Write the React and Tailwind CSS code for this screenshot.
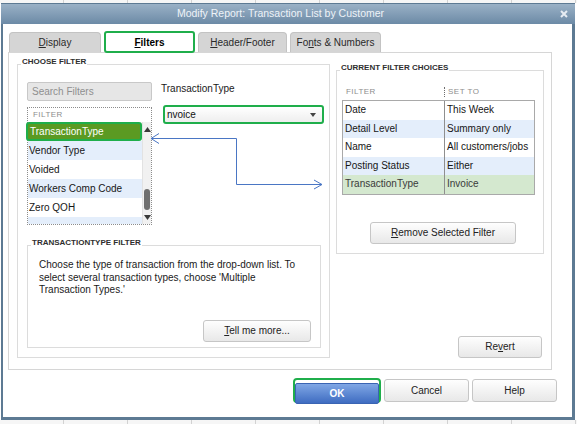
import React from "react";

const filterRows = ["Vendor Type", "Voided", "Workers Comp Code", "Zero QOH"];

const choices = [
  ["Date", "This Week"],
  ["Detail Level", "Summary only"],
  ["Name", "All customers/jobs"],
  ["Posting Status", "Either"],
  ["TransactionType", "Invoice"],
];

const stripe = (on) => (on ? "bg-[#e4eefb]" : "bg-white");

function GroupBox({ title, className, children }) {
  return (
    <div className={`relative border border-[#dcdcdc] ${className}`}>
      <span className="absolute -top-[7px] left-[3px] bg-white px-[1px] text-[8px] font-bold leading-none text-[#2e2e2e]">
        {title}
      </span>
      {children}
    </div>
  );
}

function Btn({ className, children }) {
  return (
    <button
      className={`flex items-center justify-center rounded-[3px] border border-[#c6c6c6] bg-linear-to-b from-[#fefefe] to-[#e8e8e8] text-[10px] leading-none text-[#222] ${className}`}
    >
      {children}
    </button>
  );
}

function Tri({ down }) {
  return (
    <svg width="7" height="5" viewBox="0 0 7 5">
      <path d={down ? "M0 0H7L3.5 5Z" : "M3.5 0L7 5H0Z"} fill="#3a3a3a" />
    </svg>
  );
}

function GridStrip({ className }) {
  return (
    <div className={`flex overflow-hidden bg-[#f6f6f6] ${className}`}>
      {Array.from({ length: 10 }).map((_, i) => (
        <div key={i} className="w-[64px] shrink-0 border-r border-[#d2d2d2]" />
      ))}
    </div>
  );
}

function FilterList() {
  return (
    <div className="w-[125px] h-[118px] mt-[6px] border border-dotted border-[#8c8c8c] bg-white flex flex-col">
      <div className="h-[14px] pl-[5px] text-[8px] leading-[14px] tracking-[0.06em] text-[#8d8d8d]">
        FILTER
      </div>
      <div className="flex flex-1 min-h-0">
        <div className="flex-1 flex flex-col">
          <div className="relative z-10 -ml-[2px] w-[116px] h-[19px] shrink-0 rounded-[3px] border-2 border-[#1fae4b] bg-[#5b9a22] pl-[2px] text-[10px] leading-[15px] text-white">
            TransactionType
          </div>
          {filterRows.map((name, i) => (
            <div
              key={name}
              className={`h-[19px] shrink-0 pl-[1px] text-[10px] leading-[19px] text-[#161616] ${stripe(i % 2 === 0)}`}
            >
              {name}
            </div>
          ))}
          <div className="flex-1 bg-[#e4eefb]" />
        </div>
        <div className="w-[11px] flex flex-col items-center bg-[#f1f1f1] border-l border-[#e2e2e2]">
          <div className="h-[14px] flex items-center">
            <Tri />
          </div>
          <div className="flex-1 flex flex-col justify-end pb-[4px]">
            <div className="w-[6px] h-[21px] rounded-[3px] bg-[#6f6f6f]" />
          </div>
          <div className="h-[10px] flex items-start pt-[1px]">
            <Tri down />
          </div>
        </div>
      </div>
    </div>
  );
}

function ChoicesTable() {
  return (
    <div className="pl-[5px] mt-[14px]">
      <div className="flex items-center h-[14px] text-[8px] tracking-[0.06em] text-[#8d8d8d]">
        <div className="w-[102px] pl-[4px]">FILTER</div>
        <div className="h-[10px] border-l border-dotted border-[#6d6d6d]" />
        <div className="pl-[3px]">SET TO</div>
      </div>
      <div className="mt-[1px] w-[193px] border border-[#a9a9a9] bg-white">
        {choices.map(([name, value], i) => {
          const last = i === choices.length - 1;
          return (
            <div
              key={name}
              className={`flex h-[18.6px] text-[10px] leading-[18.6px] ${last ? "bg-[#d4e8cf] text-[#3a3a3a]" : `${stripe(i % 2 === 1)} text-[#161616]`}`}
            >
              <div className="w-[102px] pl-[2px] border-r border-[#8f8f8f]">{name}</div>
              <div className="pl-[2px] whitespace-nowrap">{value}</div>
            </div>
          );
        })}
      </div>
    </div>
  );
}

export default function App() {
  return (
    <div className="relative w-[577px] h-[424px] overflow-hidden bg-white font-['Liberation_Sans',Arial,sans-serif]">
      <GridStrip className="h-[3px]" />

      <div className="flex h-[417px]">
        <div className="ml-[1px] w-[574px] h-[417px] flex flex-col">
          {/* title bar */}
          <div className="h-[21px] shrink-0 flex items-center bg-linear-to-b from-[#9ab1c6] to-[#6c8aa6] border-t border-[#5d7a93]">
            <div className="flex-1 text-center text-[10.5px] text-[#eef3f8]">
              Modify Report: Transaction List by Customer
            </div>
            <svg width="8" height="8" viewBox="0 0 8 8" className="mr-[7px]">
              <path d="M1 1L7 7M7 1L1 7" stroke="#e6ecf2" strokeWidth="2" />
            </svg>
          </div>

          <div className="h-[396px] flex flex-col bg-white border-l-2 border-r-[3px] border-b-[3px] border-[#5d7a93] px-[5px] pt-[8px]">
            {/* tabs */}
            <div className="flex gap-[3px] h-[20px] shrink-0 pl-[1px] text-[10px] text-[#2a2a2a]">
              <div className="w-[92px] h-[20px] flex items-center justify-center rounded-t-[4px] border border-b-0 border-[#c3c3c3] bg-[#d5d5d5]">
                <span><u className="underline-offset-1">D</u>isplay</span>
              </div>
              <div className="relative z-10 w-[91px] h-[22px] -mt-[1px] flex items-center justify-center rounded-[3px] border-2 border-[#1fae4b] bg-white font-bold text-black">
                <span><u className="underline-offset-1">F</u>ilters</span>
              </div>
              <div className="w-[89px] h-[20px] flex items-center justify-center rounded-t-[4px] border border-b-0 border-[#c3c3c3] bg-[#d5d5d5]">
                <span><u className="underline-offset-1">H</u>eader/Footer</span>
              </div>
              <div className="w-[91px] h-[20px] flex items-center justify-center rounded-t-[4px] border border-b-0 border-[#c3c3c3] bg-[#d5d5d5]">
                <span>Fo<u className="underline-offset-1">n</u>ts &amp; Numbers</span>
              </div>
            </div>

            {/* tab page */}
            <div className="w-[544px] h-[318px] shrink-0 border border-[#d6d6d6] flex pl-[8px] pt-[11px]">
              <GroupBox title="CHOOSE FILTER" className="w-[313px] h-[294px] pl-[9px] pt-[17px] flex flex-col">
                <div className="flex items-start">
                  <div className="w-[125px] h-[19px] rounded-[2px] border border-[#c8c8c8] bg-[#e6e6e6] pl-[4px] text-[10px] leading-[17px] text-[#8f8f8f]">
                    Search Filters
                  </div>
                  <div className="ml-[9px] mt-[1px] text-[10px] leading-[12px] text-[#1a1a1a]">
                    TransactionType
                  </div>
                </div>

                <div className="flex items-start">
                  <FilterList />
                  <div className="ml-[11px] mt-[4px] w-[161px] h-[19px] flex items-center justify-between rounded-[3px] border-2 border-[#1fae4b] bg-linear-to-b from-white to-[#eeeeee] pl-[2px] pr-[6px] text-[10px] text-[#111]">
                    <span>nvoice</span>
                    <svg width="6" height="4" viewBox="0 0 6 4">
                      <path d="M0 0H6L3 4Z" fill="#444" />
                    </svg>
                  </div>
                </div>

                <GroupBox title="TRANSACTIONTYPE FILTER" className="mt-[20px] w-[294px] h-[103px] flex flex-col">
                  <p className="pl-[11px] pt-[13px] text-[10px] leading-[12.5px] text-[#1a1a1a]">
                    Choose the type of transaction from the drop-down list. To
                    <br />
                    select several transaction types, choose &apos;Multiple
                    <br />
                    Transaction Types.&apos;
                  </p>
                  <Btn className="mt-auto mb-[5px] mr-[9px] self-end w-[108px] h-[22px]">
                    <span><u className="underline-offset-1">T</u>ell me more...</span>
                  </Btn>
                </GroupBox>
              </GroupBox>

              <div className="ml-[6px] w-[208px] h-[294px] flex flex-col">
                <GroupBox title="CURRENT FILTER CHOICES" className="mt-[6px] h-[184px] flex flex-col">
                  <ChoicesTable />
                  <Btn className="mt-[27px] ml-[33px] w-[146px] h-[22px]">
                    <span><u className="underline-offset-1">R</u>emove Selected Filter</span>
                  </Btn>
                </GroupBox>
                <Btn className="mt-auto mr-[2px] self-end w-[84px] h-[22px]">
                  <span>Re<u className="underline-offset-1">v</u>ert</span>
                </Btn>
              </div>
            </div>

            {/* dialog buttons */}
            <div className="flex justify-end items-center gap-[3px] pr-[10px] mt-[8px]">
              <div className="w-[88px] h-[25px] rounded-[4px] border-2 border-[#1fae4b]">
                <button className="w-full h-full rounded-[2px] border border-[#3a64b3] bg-linear-to-b from-[#80a7e5] to-[#3f6cc1] text-[10px] font-bold text-white">
                  OK
                </button>
              </div>
              <Btn className="w-[85px] h-[23px]">Cancel</Btn>
              <Btn className="w-[85px] h-[23px]">Help</Btn>
            </div>
          </div>
        </div>
        <div className="flex-1 bg-white" />
      </div>

      <GridStrip className="h-[4px]" />

      {/* callout arrows linking the list, the value box and the table */}
      <svg className="pointer-events-none absolute inset-0" width="577" height="424" viewBox="0 0 577 424">
        <g fill="none" stroke="#4a76c4" strokeWidth="1">
          <path d="M151 138.5H236.5V184.5H322" />
          <path d="M159 133.5L151 138.5L159 143.5" />
          <path d="M314 180L322 184.5L314 189" />
        </g>
      </svg>
    </div>
  );
}
